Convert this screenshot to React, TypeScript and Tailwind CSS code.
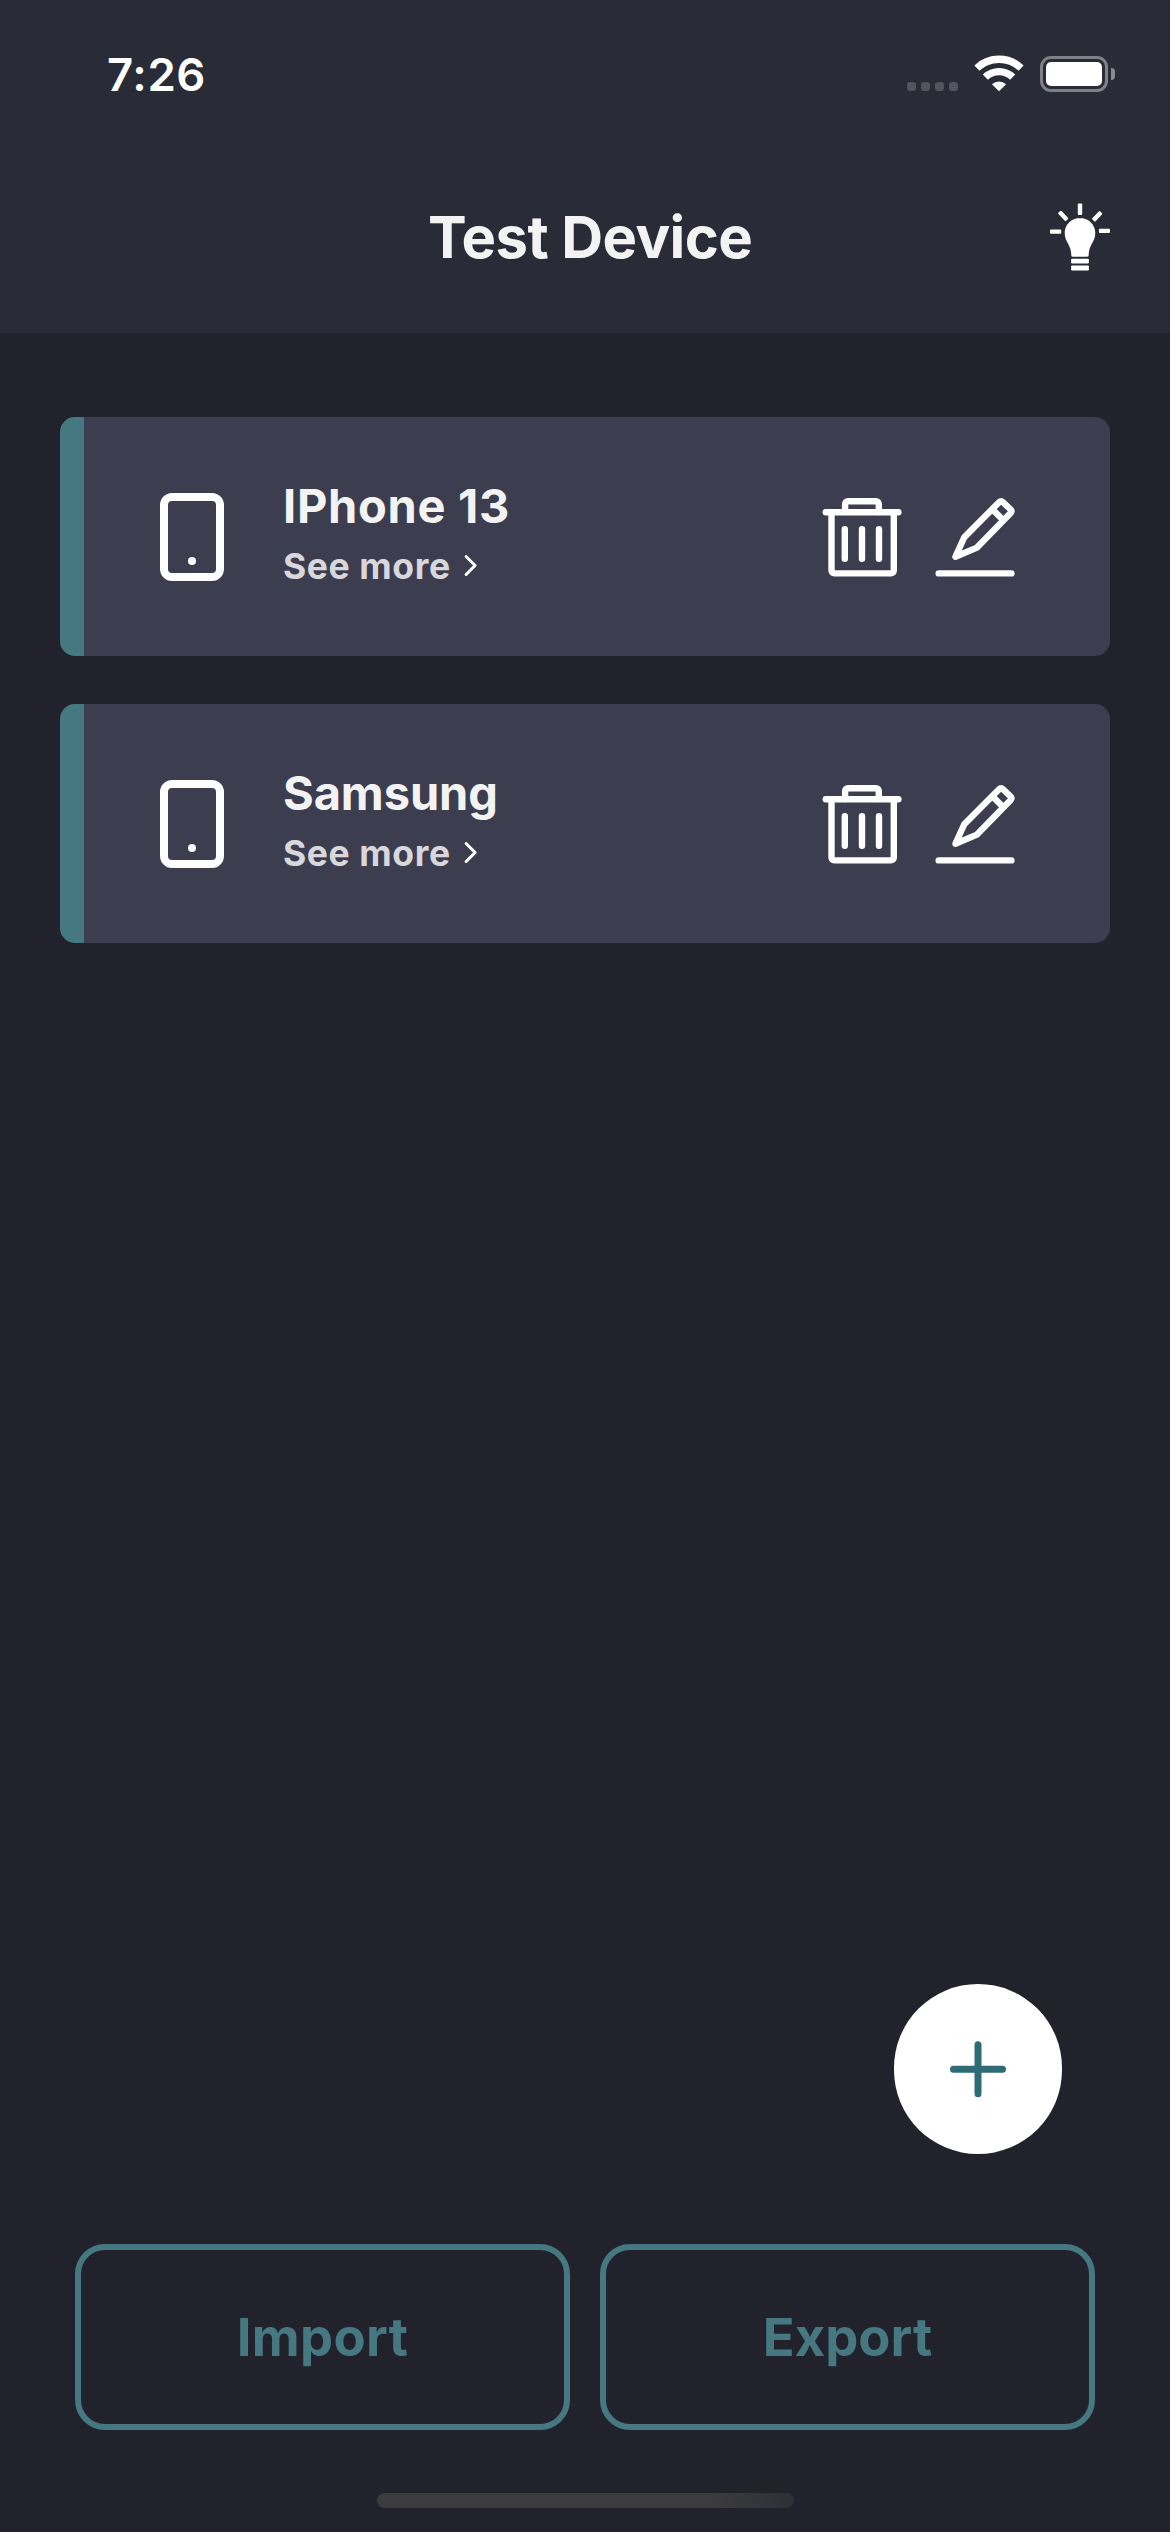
import React from "react";

function SignalDots() {
  return (
    <div className="mt-[27px] flex gap-[5px]">
      {[0, 1, 2, 3].map((i) => (
        <span key={i} className="size-[9px] rounded-[3px] bg-[#53555e]" />
      ))}
    </div>
  );
}

function WifiIcon() {
  return (
    <svg className="ml-4 h-[37px] w-[50px]" viewBox="0 0 50 37" fill="none" stroke="#fff" strokeWidth="7.4">
      <path d="M2.9 13.1A32.2 32.2 0 0 1 47.1 13.1" />
      <path d="M11.3 22.2A19.6 19.6 0 0 1 38.7 22.2" />
      <path d="M25 36.3L17.9 29.2A10.8 10.8 0 0 1 32.1 29.2Z" fill="#fff" stroke="none" />
    </svg>
  );
}

function Battery() {
  return (
    <div className="mt-px ml-4 flex items-center">
      <div className="h-9 w-[68px] rounded-[11px] border-3 border-[#808188] p-[3px]">
        <div className="h-full rounded-[5px] bg-white" />
      </div>
      <div className="ml-[3px] h-3 w-1 rounded-r-full bg-[#8b8c92]" />
    </div>
  );
}

function BulbIcon() {
  return (
    <svg className="h-[68px] w-[60px]" viewBox="0 0 60 68" fill="#fff">
      <rect x="27.8" y="0.4" width="4.4" height="11.6" rx="1" />
      <rect x="0" y="26.4" width="11.2" height="4.4" rx="1" />
      <rect x="48.9" y="25.7" width="11.1" height="4.4" rx="1" />
      <rect x="7.6" y="10.7" width="11.2" height="4.4" rx="1" transform="rotate(46 13.2 12.9)" />
      <rect x="41.6" y="11.1" width="11.2" height="4.4" rx="1" transform="rotate(-46 47.2 13.3)" />
      <path d="M30 14.9c-8.6 0-15.3 6.7-15.3 15 0 9.4 6.6 11.5 6.6 22.2 0 1 .4 1.6 1.3 1.6h14.8c.9 0 1.3-.6 1.3-1.6 0-10.7 6.6-12.8 6.6-22.2 0-8.3-6.7-15-15.3-15z" />
      <rect x="21.1" y="55.7" width="17.8" height="4.9" rx="1" />
      <rect x="21.1" y="62.6" width="17.8" height="4.9" rx="1" />
    </svg>
  );
}

function PhoneIcon() {
  return (
    <svg className="h-[88px] w-16" viewBox="0 0 64 88" fill="none">
      <rect x="4" y="4" width="56" height="80" rx="8" stroke="#fff" strokeWidth="8" />
      <circle cx="32" cy="68" r="4" fill="#fff" />
    </svg>
  );
}

function TrashIcon() {
  return (
    <svg className="size-20" viewBox="0 0 80 80" fill="none" stroke="#fff" strokeWidth="6.4" strokeLinecap="round" strokeLinejoin="round">
      <path d="M3.8 15.3H76.4" />
      <path d="M23.1 15V7a2.8 2.8 0 0 1 2.8-2.8H54a2.8 2.8 0 0 1 2.8 2.8v8" />
      <path d="M9.5 15.3V73.6a2.8 2.8 0 0 0 2.8 2.8H69a2.8 2.8 0 0 0 2.8-2.8V15.3" />
      <path d="M22.8 32.2V61.7M40 32.2V61.7M57 32.2V61.7" />
    </svg>
  );
}

function PencilIcon() {
  return (
    <svg className="size-20" viewBox="0 0 80 80" fill="none" stroke="#fff" strokeWidth="6.4" strokeLinecap="round" strokeLinejoin="round">
      <path d="M29.3 40.2L64.6 4.7a2 2 0 0 1 2.9 0L75.9 12.8a2 2 0 0 1 0 2.9L42 50.6L20.4 59.8Z" />
      <path d="M57.8 12.8L67.6 22.6" strokeLinecap="butt" />
      <path d="M3.7 76.4H76.4" />
    </svg>
  );
}

function DeviceCard({ name, spacing }: { name: string; spacing: string }) {
  return (
    <article className="flex h-[239px] overflow-hidden rounded-[15px] bg-[#3d3d50]">
      <div className="w-6 bg-[#457880]" />
      <div className="flex grow items-center pt-px">
        <div className="ml-[76px]">
          <PhoneIcon />
        </div>
        <div className="mb-[2px] ml-[59px] flex flex-col font-bold">
          <h2 className={`text-[47px] leading-[60px] text-[#f3f3f3] ${spacing}`}>{name}</h2>
          <button className="flex h-[60px] items-center">
            <span className="pt-[2px] text-[35.5px] leading-[60px] tracking-[0.6px] text-[#d8d8dc]">See more</span>
            <svg className="ml-3 h-6 w-4" viewBox="0 0 16 24" fill="none" stroke="#fff" strokeWidth="3" strokeLinecap="round" strokeLinejoin="round">
              <path d="M3.1 2.5L12.1 11.5L3.1 20.5" />
            </svg>
          </button>
        </div>
        <div className="mr-[95px] ml-auto flex gap-[33px]">
          <button aria-label="Delete">
            <TrashIcon />
          </button>
          <button aria-label="Edit">
            <PencilIcon />
          </button>
        </div>
      </div>
    </article>
  );
}

export default function App() {
  return (
    <div className="flex h-[2532px] w-[1170px] flex-col bg-[#22222c] font-['Inter',sans-serif]">
      <header className="h-[333px] bg-[#292b36]">
        <div className="flex h-[148px] items-start justify-between pr-[55px] pl-[107px]">
          <span className="mt-[45px] text-[45.5px] leading-[60px] font-semibold tracking-[0.6px] text-white">7:26</span>
          <div className="mt-[55px] flex items-start">
            <SignalDots />
            <WifiIcon />
            <Battery />
          </div>
        </div>
        <div className="mt-[55px] flex items-center justify-between pr-[60px] pl-[428px]">
          <h1 className="pt-px text-[58px] leading-[67px] font-bold tracking-[-0.6px] text-[#f3f3f3]">Test Device</h1>
          <BulbIcon />
        </div>
      </header>

      <main className="flex grow flex-col gap-12 px-[60px] pt-[84px]">
        <DeviceCard name="IPhone 13" spacing="tracking-[0.7px]" />
        <DeviceCard name="Samsung" spacing="tracking-[-0.1px]" />
      </main>

      <button aria-label="Add device" className="mr-[108px] mb-[90px] flex h-[170px] w-[168px] items-center justify-center self-end rounded-[84px] bg-white">
        <svg className="size-[58px]" viewBox="0 0 58 58" stroke="#2f6b77" strokeWidth="7" strokeLinecap="round">
          <path d="M4.5 29.2H53.5M29 4.7V53.7" />
        </svg>
      </button>

      <footer className="flex h-[288px] flex-col items-center">
        <div className="flex gap-[30px] text-[52.5px] font-bold text-[#457880]">
          <button className="h-[186px] w-[495px] rounded-[30px] border-6 border-[#457880] pt-px tracking-[0.3px]">Import</button>
          <button className="h-[186px] w-[495px] rounded-[30px] border-6 border-[#457880] pt-px">Export</button>
        </div>
        <div className="mt-[63px] h-[15px] w-[417px] rounded-full bg-linear-to-r from-[#3c3c3f] from-80% to-[#2f3036]" />
      </footer>
    </div>
  );
}
